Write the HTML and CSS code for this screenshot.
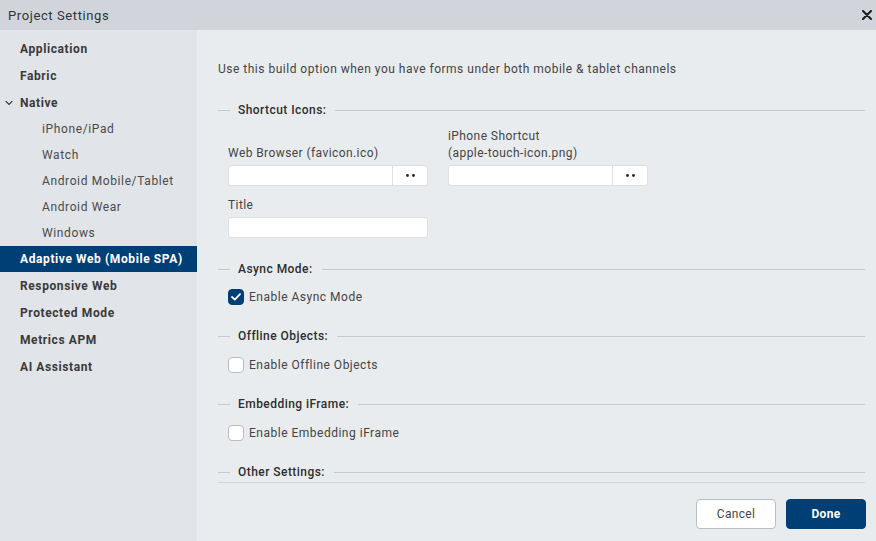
FILE: index.html
```html
<!DOCTYPE html>
<html>
<head>
<meta charset="utf-8">
<link rel="stylesheet" href="styles.css">
</head>
<body>
<div class="dialog">
  <div class="header">
    <span class="header-title">Project Settings</span>
    <svg class="close" width="10" height="10" viewBox="0 0 10 10"><path d="M1 1 L9 9 M9 1 L1 9" stroke="#1a1a1a" stroke-width="2" stroke-linecap="round"/></svg>
  </div>
  <div class="main">
    <nav class="sidebar">
      <div class="nav-item">Application</div>
      <div class="nav-item">Fabric</div>
      <div class="nav-item nav-group">
        <svg class="chev" width="8" height="6" viewBox="0 0 8 6"><path d="M0.7 1.2 L4 4.5 L7.3 1.2" fill="none" stroke="#333" stroke-width="1.2"/></svg>
        Native
      </div>
      <div class="nav-sub">iPhone/iPad</div>
      <div class="nav-sub">Watch</div>
      <div class="nav-sub">Android Mobile/Tablet</div>
      <div class="nav-sub">Android Wear</div>
      <div class="nav-sub">Windows</div>
      <div class="nav-item active">Adaptive Web (Mobile SPA)</div>
      <div class="nav-item">Responsive Web</div>
      <div class="nav-item">Protected Mode</div>
      <div class="nav-item">Metrics APM</div>
      <div class="nav-item">AI Assistant</div>
    </nav>
    <div class="content">
      <div class="scroll">
        <p class="desc">Use this build option when you have forms under both mobile &amp; tablet channels</p>

        <div class="legend first"><span class="dash"></span><span class="legend-text">Shortcut Icons:</span><span class="rule"></span></div>
        <div class="fields-row">
          <div class="field">
            <label class="field-label">Web Browser (favicon.ico)</label>
            <div class="picker"><span class="picker-input"></span><span class="picker-btn"><svg width="9" height="3" viewBox="0 0 9 3"><circle cx="1.5" cy="1.5" r="1.4" fill="#222"/><circle cx="7.5" cy="1.5" r="1.4" fill="#222"/></svg></span></div>
          </div>
          <div class="field">
            <label class="field-label">iPhone Shortcut<br>(apple-touch-icon.png)</label>
            <div class="picker"><span class="picker-input"></span><span class="picker-btn"><svg width="9" height="3" viewBox="0 0 9 3"><circle cx="1.5" cy="1.5" r="1.4" fill="#222"/><circle cx="7.5" cy="1.5" r="1.4" fill="#222"/></svg></span></div>
          </div>
        </div>
        <div class="field title-field">
          <label class="field-label">Title</label>
          <div class="text-input"></div>
        </div>

        <div class="legend sec"><span class="dash"></span><span class="legend-text">Async Mode:</span><span class="rule"></span></div>
        <div class="check-row tight">
          <span class="checkbox checked"><svg width="10" height="8" viewBox="0 0 10 8"><path d="M1 4 L3.8 6.6 L9 1.2" fill="none" stroke="#fff" stroke-width="1.8" stroke-linecap="round" stroke-linejoin="round"/></svg></span>
          <span class="check-label">Enable Async Mode</span>
        </div>

        <div class="legend sec"><span class="dash"></span><span class="legend-text">Offline Objects:</span><span class="rule"></span></div>
        <div class="check-row">
          <span class="checkbox"></span>
          <span class="check-label">Enable Offline Objects</span>
        </div>

        <div class="legend sec"><span class="dash"></span><span class="legend-text">Embedding iFrame:</span><span class="rule"></span></div>
        <div class="check-row">
          <span class="checkbox"></span>
          <span class="check-label">Enable Embedding iFrame</span>
        </div>

        <div class="legend sec"><span class="dash"></span><span class="legend-text">Other Settings:</span><span class="rule"></span></div>
      </div>
      <div class="footer">
        <button class="btn cancel">Cancel</button>
        <button class="btn done">Done</button>
      </div>
    </div>
  </div>
</div>
</body>
</html>
```
FILE: styles.css
```css
* { box-sizing: border-box; }
html, body { margin: 0; padding: 0; }
body {
  width: 876px;
  height: 541px;
  overflow: hidden;
  font-family: Roboto, "Liberation Sans", Arial, sans-serif;
  color: #333;
  background: #e9ecef;
}
.dialog {
  display: flex;
  flex-direction: column;
  height: 541px;
}
.header {
  height: 30px;
  flex: none;
  background: #d1d5db;
  display: flex;
  align-items: center;
  justify-content: space-between;
  padding: 0 4px 0 8px;
}
.header-title {
  font-size: 13px;
  color: #333;
  letter-spacing: 0.6px;
}
.close { display: block; }
.main {
  flex: 1;
  display: flex;
  min-height: 0;
}
.sidebar {
  width: 197px;
  flex: none;
  background: #e1e4e8;
  padding-top: 5px;
}
.nav-item {
  height: 27px;
  display: flex;
  align-items: center;
  padding-left: 20px;
  font-size: 12px;
  font-weight: 700;
  color: #3a3a3a;
  letter-spacing: 0.6px;
}
.nav-group {
  padding-left: 5px;
  padding-top: 1px;
}
.chev { margin-right: 7px; }
.nav-sub {
  height: 26px;
  display: flex;
  align-items: center;
  padding-left: 42px;
  font-size: 12px;
  color: #4a4a4a;
  letter-spacing: 0.62px;
}
.nav-item.active {
  height: 26px;
  background: #003f76;
  color: #fff;
}
.content {
  flex: 1;
  display: flex;
  flex-direction: column;
  padding: 0 11px 0 21px;
  background: #e9ecef;
}
.scroll {
  flex: none;
  height: 453px;
  border-bottom: 1px solid #d2d6db;
}
.desc {
  margin: 0;
  padding-top: 31px;
  font-size: 12px;
  line-height: 16px;
  color: #444;
  letter-spacing: 0.5px;
}
.legend {
  display: flex;
  align-items: center;
  height: 16px;
}
.legend.first { margin-top: 25px; }
.legend.sec { margin-top: 23px; }
.dash {
  width: 12px;
  height: 1px;
  background: #c6cacf;
  flex: none;
}
.legend-text {
  font-size: 12px;
  font-weight: 500;
  color: #2e2e2e;
  padding: 0 9px 0 8px;
  letter-spacing: 0.45px;
}
.rule {
  flex: 1;
  height: 1px;
  background: #c6cacf;
}
.fields-row {
  display: flex;
  align-items: flex-end;
  gap: 20px;
  margin-top: 9px;
  padding-left: 10px;
}
.field {
  display: flex;
  flex-direction: column;
  width: 200px;
}
.field-label {
  font-size: 12px;
  line-height: 17px;
  color: #444;
  padding-top: 1px;
  margin-bottom: 3px;
  letter-spacing: 0.42px;
}
.picker {
  display: flex;
  height: 21px;
  background: #fff;
  border: 1px solid #dcdfe3;
  border-radius: 3px;
}
.picker-input { flex: 1; }
.picker-btn {
  width: 35px;
  border-left: 1px solid #dcdfe3;
  display: flex;
  align-items: center;
  justify-content: center;
}
.picker-btn svg { display: block; }
.title-field {
  margin-top: 10px;
  margin-left: 10px;
}
.text-input {
  height: 21px;
  background: #fff;
  border: 1px solid #dcdfe3;
  border-radius: 3px;
}
.check-row {
  display: flex;
  align-items: center;
  height: 16px;
  margin-top: 13px;
  padding-left: 10px;
}
.check-row.tight { margin-top: 12px; }
.checkbox {
  width: 16px;
  height: 16px;
  border-radius: 4px;
  background: #fff;
  border: 1px solid #b8bdc3;
  display: flex;
  align-items: center;
  justify-content: center;
  flex: none;
}
.checkbox.checked {
  background: #003f76;
  border-color: #003f76;
}
.check-label {
  margin-left: 5px;
  font-size: 12px;
  color: #444;
  letter-spacing: 0.5px;
}
.footer {
  flex: 1;
  display: flex;
  justify-content: flex-end;
  align-items: flex-start;
  gap: 10px;
  padding-top: 16px;
  margin-right: -1px;
}
.btn {
  width: 80px;
  height: 30px;
  border-radius: 4px;
  font-family: Roboto, "Liberation Sans", Arial, sans-serif;
  font-size: 12px;
  letter-spacing: 0.3px;
  cursor: pointer;
}
.cancel {
  background: #fff;
  border: 1px solid #b9bec4;
  color: #444;
}
.done {
  background: #003f76;
  border: 1px solid #003f76;
  color: #fff;
  font-weight: 700;
}
```
